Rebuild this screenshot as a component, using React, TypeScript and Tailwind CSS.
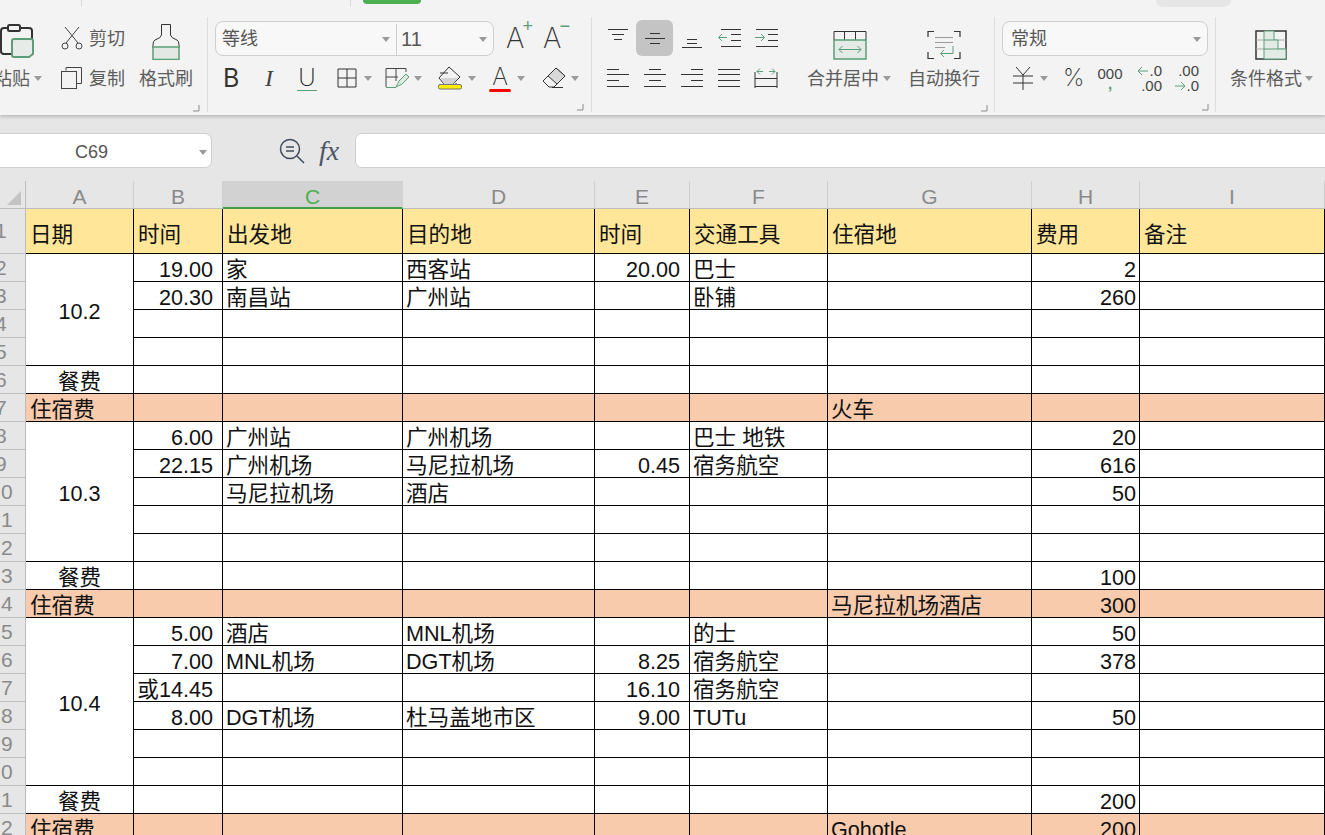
import React from "react";

const FONT = "[font-family:'Liberation_Sans','Noto_Sans_CJK_SC',sans-serif]";

function Caret() {
  return <span className="block h-0 w-0 border-x-[4px] border-t-[5px] border-x-transparent border-t-[#9a9a9a]" />;
}

function Corner() {
  return (
    <svg width="8" height="8" viewBox="0 0 8 8" className="block">
      <path d="M7 1V7H1" fill="none" stroke="#8c8c8c" />
    </svg>
  );
}

function Icon({ w, h, children }: { w: number; h: number; children: React.ReactNode }) {
  return (
    <svg width={w} height={h} viewBox={`0 0 ${w} ${h}`} className="block shrink-0" fill="none" stroke="#333" strokeWidth="1">
      {children}
    </svg>
  );
}

const G = "#5b9e78";

function Paste() {
  return (
    <Icon w={36} h={40}>
      <path d="M7 8H4a3 3 0 0 0-3 3v20a3 3 0 0 0 3 3h8M20 8h9a3 3 0 0 1 3 3v8" strokeWidth="2" />
      <rect x="8" y="5" width="12" height="6" rx="1.5" strokeWidth="2" />
      <path d="M14 19h17a2 2 0 0 1 2 2v13l-4 3H14a2 2 0 0 1-2-2V21a2 2 0 0 1 2-2z" fill="#e6ebe7" stroke={G} strokeWidth="2" />
    </Icon>
  );
}
function Cut() {
  return (
    <Icon w={24} h={24}>
      <path d="M5 1L18 17M19 1L6 17" stroke="#444" />
      <circle cx="5" cy="20" r="3" stroke="#444" />
      <circle cx="19" cy="20" r="3" stroke="#444" />
    </Icon>
  );
}
function Copy() {
  return (
    <Icon w={24} h={24}>
      <path d="M6 4.500V1.500H21.500V17.500H16" stroke="#444" />
      <rect x="1.500" y="5.500" width="15" height="17" stroke="#444" />
    </Icon>
  );
}
function Brush() {
  return (
    <Icon w={28} h={36}>
      <path d="M9.500 0.500H18.500V11Q19 14 25 16Q27 17 27 21V24H1V21Q1 17 3 16Q9 14 9.500 11Z" stroke="#333" />
      <rect x="1" y="23" width="26" height="12.500" fill="#e3e8e4" stroke={G} strokeWidth="1.500" />
    </Icon>
  );
}
function Borders() {
  return (
    <Icon w={20} h={20}>
      <path d="M1 1H19V19H1ZM10 1V19M1 10H19" stroke="#333" />
    </Icon>
  );
}
function PaintTable() {
  return (
    <Icon w={24} h={22}>
      <path d="M1 20V1.500H21V5M11 1.500V14M1 10H13" stroke="#444" />
      <path d="M1 20.500H11" stroke={G} />
      <path d="M11 20L14 14L21 7L24 10L17 17Z" stroke={G} fill="#dfeae3" />
    </Icon>
  );
}
function Fill() {
  return (
    <Icon w={24} h={24}>
      <path d="M11 1L22 11L15 18H6L1 12Z" stroke="#333" />
      <path d="M3 12H20L15 18H6Z" fill="#d2d2d2" stroke="none" />
      <path d="M2 7H10M18 19V17" stroke="#333" />
      <rect x="0.500" y="18.500" width="23" height="4.500" rx="1.500" fill="#ffee00" stroke="#777" />
    </Icon>
  );
}
function Eraser() {
  return (
    <Icon w={24} h={22}>
      <path d="M1 14L14 1L23 9L12 20H7Z" stroke="#333" />
      <path d="M6 9L14 1L23 9L15 17Z" fill="#d9d9d9" stroke="#333" />
      <path d="M10 20.500H21" stroke="#333" />
    </Icon>
  );
}
function LetterA({ size, color = "#333" }: { size: string; color?: string }) {
  return <span className={`block font-['Inter'] font-extralight ${size} leading-none`} style={{ color }}>A</span>;
}

function AlignBlock({ d, green }: { d: string; green?: string }) {
  return (
    <Icon w={24} h={24}>
      <path d={d} stroke="#333" />
      {green && <path d={green} stroke={G} />}
    </Icon>
  );
}
function Merge() {
  return (
    <Icon w={34} h={30}>
      <path d="M1 10V1.500H33V10M11.500 1.500V10M22.500 1.500V10" stroke="#333" />
      <rect x="1" y="10" width="32" height="19" fill="#e4ebe6" stroke={G} strokeWidth="1.500" />
      <path d="M6 19.500H28M9.500 16L6 19.500L9.500 23M24.500 16L28 19.500L24.500 23" stroke={G} />
    </Icon>
  );
}
function Wrap() {
  return (
    <Icon w={34} h={30}>
      <path d="M7 1.500H1V7M27 1.500H33V7M1 22V28.500H7M33 22V28.500H27" stroke="#333" strokeWidth="1.200" />
      <path d="M8 7.500H26M8 12.500H26M8 17.500H18" stroke="#999" />
      <path d="M26 16V23.500H14M17 20L13.500 23.500L17 27" stroke={G} />
    </Icon>
  );
}
function Yen() {
  return (
    <Icon w={20} h={24}>
      <path d="M3 1L10 9L17 1M0 10H20M0 17H20M10 9V24" stroke="#333" />
    </Icon>
  );
}
function Cond() {
  return (
    <Icon w={32} h={30}>
      <rect x="1" y="1" width="30" height="28" stroke="#333" strokeWidth="1.500" />
      <path d="M1 10H31M1 19H31M11 1V29M21 10V19" stroke="#aaa" />
      <path d="M9 1H19V10H23V19H31V29H9Z" fill="#e2ebe5" stroke={G} />
      <path d="M9 10H19M9 19H23" stroke={G} />
    </Icon>
  );
}
function SmallArrow({ left }: { left?: boolean }) {
  return (
    <svg width="12" height="10" viewBox="0 0 12 10" fill="none" stroke={G} className="block shrink-0">
      {left ? <path d="M11 5H1M5 1L1 5L5 9" /> : <path d="M1 5H11M7 1L11 5L7 9" />}
    </svg>
  );
}

function TextButton({ label }: { label: string }) {
  return <span className="pt-[2px] text-[18px] leading-[24px] text-[#5c5c5c] whitespace-nowrap">{label}</span>;
}

function Sep() {
  return <div className="w-px shrink-0 bg-[#dedede]" />;
}

function Combo({ className, children }: { className: string; children: React.ReactNode }) {
  return (
    <div className={`flex h-[35px] items-center rounded-[8px] border border-[#cfcfcf] bg-[#f8f8f8] pt-[2px] text-[18px] text-[#555] ${className}`}>
      {children}
    </div>
  );
}

function Ribbon() {
  return (
    <div className="relative z-10 h-[115px] bg-[#f3f3f3] shadow-[0_2px_3px_rgba(0,0,0,0.18)]">
      <div className="flex h-[17px] items-start overflow-hidden">
        <div className="ml-[81px] h-[7px] w-px bg-[#dcdcdc]" />
        <div className="ml-[268px] h-[7px] w-px bg-[#dcdcdc]" />
        <div className="ml-[12px] h-[4px] w-[58px] rounded-b-[8px] bg-[#4caf50]" />
        <div className="ml-[735px] h-[7px] w-[75px] rounded-b-[12px] bg-[#e6e6e6]" />
      </div>
      <div className="flex h-[95px]">
        {/* clipboard */}
        <div className="ml-[-10px] flex w-[217px] shrink-0 flex-col pt-[3px]">
          <div className="flex h-[76px]">
            <div className="flex w-[70px] shrink-0 flex-col">
              <div className="h-[40px] pl-[10px]"><Paste /></div>
              <div className="flex h-[36px] items-center gap-[4px] pl-[4px]">
                <span className="w-[36px] pt-[2px] text-[18px] leading-[24px] text-[#5c5c5c] whitespace-nowrap">粘贴</span>
                <Caret />
              </div>
            </div>
            <div className="flex w-[79px] shrink-0 flex-col">
              <div className="flex h-[36px] items-center gap-[5px]"><Cut /><TextButton label="剪切" /></div>
              <div className="mt-[4px] flex h-[36px] items-center gap-[5px]"><Copy /><TextButton label="复制" /></div>
            </div>
            <div className="flex w-[54px] shrink-0 flex-col items-center">
              <div className="h-[40px] pt-[4px]"><Brush /></div>
              <div className="flex h-[36px] items-center"><TextButton label="格式刷" /></div>
            </div>
          </div>
          <div className="mt-[8px] flex justify-end pr-[7px]"><Corner /></div>
        </div>
        <Sep />
        {/* font */}
        <div className="flex w-[383px] shrink-0 flex-col pt-[3px]">
          <div className="flex h-[36px] items-center pl-[7px]">
            <Combo className="w-[279px]">
              <div className="flex h-full w-[181px] items-center justify-between border-r border-[#cfcfcf] pl-[6px] pr-[6px]">
                <span>等线</span><Caret />
              </div>
              <div className="flex h-full flex-1 items-center justify-between pl-[4px] pr-[6px]">
                <span className="text-[20px]">11</span><Caret />
              </div>
            </Combo>
            <div className="relative ml-[12px] w-[24px]"><LetterA size="text-[28px]" /><span className="absolute right-[-3px] top-[-7px] text-[18px] leading-none text-[#5b9e78]">+</span></div>
            <div className="relative ml-[13px] w-[24px]"><LetterA size="text-[28px]" /><span className="absolute right-[-3px] top-[-7px] text-[18px] leading-none text-[#5b9e78]">−</span></div>
          </div>
          <div className="mt-[4px] flex h-[36px] items-center">
            <span className="ml-[15px] w-[17px] font-['Inter'] text-[25px] font-normal leading-none text-[#333]">B</span>
            <span className="ml-[25px] w-[10px] font-['Liberation_Serif'] text-[24px] italic leading-none text-[#444]">I</span>
            <div className="ml-[22px] flex w-[20px] flex-col items-center">
              <span className="font-['Inter'] text-[24px] font-extralight leading-[23px] text-[#222]">U</span>
              <div className="mt-[1px] h-px w-full bg-[#5b9e78]" />
            </div>
            <div className="ml-[20px]"><Borders /></div>
            <div className="ml-[7px]"><Caret /></div>
            <div className="ml-[13px]"><PaintTable /></div>
            <div className="ml-[5px]"><Caret /></div>
            <div className="ml-[16px]"><Fill /></div>
            <div className="ml-[6px]"><Caret /></div>
            <div className="ml-[13px] flex w-[22px] flex-col items-center">
              <LetterA size="text-[24px]" />
              <div className="h-[3px] w-full rounded-sm bg-[#ff0000]" />
            </div>
            <div className="ml-[6px]"><Caret /></div>
            <div className="ml-[17px]"><Eraser /></div>
            <div className="ml-[5px]"><Caret /></div>
          </div>
          <div className="mt-[7px] flex justify-end pr-[7px]"><Corner /></div>
        </div>
        <Sep />
        {/* alignment */}
        <div className="flex w-[402px] shrink-0 flex-col pt-[3px]">
          <div className="flex h-[76px]">
            <div className="ml-[7px] grid w-[185px] shrink-0 grid-cols-[repeat(5,37px)] grid-rows-[36px_36px] gap-y-[4px]">
              <div className="flex items-center justify-center"><AlignBlock d="M2 3.500H22M6 8.500H18M8 13.500H16" /></div>
              <div className="flex items-center justify-center rounded-[6px] bg-[#c4c4c4]"><AlignBlock d="M7 7.500H17M2 12.500H22M7 17.500H17" /></div>
              <div className="flex items-center justify-center"><AlignBlock d="M7 13.500H17M7 17.500H17M2 21.500H22" /></div>
              <div className="flex items-center justify-center"><AlignBlock d="M4 3.500H24M14 8.500H24M14 14.500H24M4 20.500H24" green="M10 11.500H2M5 8L1.500 11.500L5 15" /></div>
              <div className="flex items-center justify-center"><AlignBlock d="M2 3.500H24M14 8.500H24M14 14.500H24M2 20.500H24" green="M1 11.500H10M7 8L10.500 11.500L7 15" /></div>
              <div className="flex items-center justify-center"><AlignBlock d="M1 3.500H13M1 8.500H23M1 14.500H13M1 20.500H23" /></div>
              <div className="flex items-center justify-center"><AlignBlock d="M6 3.500H18M1 8.500H23M6 14.500H18M1 20.500H23" /></div>
              <div className="flex items-center justify-center"><AlignBlock d="M11 3.500H23M1 8.500H23M11 14.500H23M1 20.500H23" /></div>
              <div className="flex items-center justify-center"><AlignBlock d="M1 3.500H23M1 8.500H23M1 14.500H23M1 20.500H23" /></div>
              <div className="flex items-center justify-center"><AlignBlock d="M1 6V22M23 6V22M1 12.500H23M1 20.500H23" green="M3 5.500H9M6 2.500L3 5.500L6 8.500M21 5.500H15M18 2.500L21 5.500L18 8.500" /></div>
            </div>
            <div className="ml-[16px] flex w-[94px] shrink-0 flex-col pl-[7px]">
              <div className="flex h-[40px] items-end pl-[26px]"><Merge /></div>
              <div className="flex h-[36px] items-center gap-[4px]"><TextButton label="合并居中" /><Caret /></div>
            </div>
            <div className="ml-[14px] flex w-[72px] shrink-0 flex-col items-center">
              <div className="flex h-[40px] items-end"><Wrap /></div>
              <div className="flex h-[36px] items-center"><TextButton label="自动换行" /></div>
            </div>
          </div>
          <div className="mt-[8px] flex justify-end pr-[6px]"><Corner /></div>
        </div>
        <Sep />
        {/* number */}
        <div className="flex w-[220px] shrink-0 flex-col pt-[3px]">
          <div className="flex h-[36px] items-center pl-[7px]">
            <Combo className="w-[206px] justify-between pl-[8px] pr-[6px]"><span>常规</span><Caret /></Combo>
          </div>
          <div className="mt-[4px] flex h-[36px] items-center">
            <div className="ml-[18px]"><Yen /></div>
            <div className="ml-[7px]"><Caret /></div>
            <span className="ml-[15px] w-[22px] font-['Inter'] text-[24px] font-extralight leading-none text-[#333]">%</span>
            <div className="ml-[14px] flex w-[22px] flex-col items-center text-[15px] leading-[15px] text-[#444]">
              <span>000</span><span className="mt-[-3px] font-bold leading-[12px] text-[#5b9e78]">,</span>
            </div>
            <div className="ml-[17px] flex w-[24px] flex-col items-end text-[15px] leading-[15px] text-[#444]">
              <span className="flex items-center"><SmallArrow left /><span>.0</span></span>
              <span>.00</span>
            </div>
            <div className="ml-[13px] flex w-[24px] flex-col items-end text-[15px] leading-[15px] text-[#444]">
              <span>.00</span>
              <span className="flex items-center"><SmallArrow /><span>.0</span></span>
            </div>
          </div>
          <div className="mt-[7px] flex justify-end pr-[6px]"><Corner /></div>
        </div>
        <Sep />
        {/* conditional */}
        <div className="flex w-[100px] shrink-0 flex-col pl-[14px] pt-[3px]">
          <div className="flex h-[40px] items-end pl-[25px]"><Cond /></div>
          <div className="flex h-[36px] items-center gap-[3px]"><TextButton label="条件格式" /><Caret /></div>
        </div>
      </div>
    </div>
  );
}

function FormulaBar() {
  return (
    <div className="flex h-[66px] items-start bg-[#e6e6e6] pt-[18px]">
      <div className="ml-[-10px] flex h-[35px] w-[222px] shrink-0 items-center rounded-[7px] border border-[#cfcfcf] bg-white pr-[4px] pt-[3px] text-[18px] text-[#555]">
        <span className="ml-[84px] w-[34px]">C69</span>
        <span className="ml-auto"><Caret /></span>
      </div>
      <div className="ml-[67px] flex h-[35px] w-[28px] shrink-0 items-center">
        <svg width="26" height="26" viewBox="0 0 26 26" fill="none" stroke="#3f4b5c" strokeWidth="1.500">
          <circle cx="11" cy="11" r="9.500" />
          <path d="M7 9H15M7 13H15M18 18L25 25" />
        </svg>
      </div>
      <span className="ml-[12px] h-[35px] w-[24px] shrink-0 font-['Liberation_Serif'] text-[28px] italic leading-[35px] text-[#4b5563]">fx</span>
      <div className="ml-[12px] mr-[-10px] h-[35px] flex-1 rounded-[7px] border border-[#cfcfcf] bg-white" />
    </div>
  );
}

type Row = { a?: string; span?: number; aLeft?: boolean; b?: string; c?: string; d?: string; e?: string; f?: string; g?: string; h?: string; fill?: string };

const ROWS: Row[] = [
  { a: "10.2", span: 4, b: "19.00", c: "家", d: "西客站", e: "20.00", f: "巴士", h: "2" },
  { b: "20.30", c: "南昌站", d: "广州站", f: "卧铺", h: "260" },
  {},
  {},
  { a: "餐费", span: 1 },
  { a: "住宿费", span: 1, aLeft: true, g: "火车", fill: "bg-[#f8cbad]" },
  { a: "10.3", span: 5, b: "6.00", c: "广州站", d: "广州机场", f: "巴士 地铁", h: "20" },
  { b: "22.15", c: "广州机场", d: "马尼拉机场", e: "0.45", f: "宿务航空", h: "616" },
  { c: "马尼拉机场", d: "酒店", h: "50" },
  {},
  {},
  { a: "餐费", span: 1, h: "100" },
  { a: "住宿费", span: 1, aLeft: true, g: "马尼拉机场酒店", h: "300", fill: "bg-[#f8cbad]" },
  { a: "10.4", span: 6, b: "5.00", c: "酒店", d: "MNL机场", f: "的士", h: "50" },
  { b: "7.00", c: "MNL机场", d: "DGT机场", e: "8.25", f: "宿务航空", h: "378" },
  { b: "或14.45", e: "16.10", f: "宿务航空" },
  { b: "8.00", c: "DGT机场", d: "杜马盖地市区", e: "9.00", f: "TUTu", h: "50" },
  {},
  {},
  { a: "餐费", span: 1, h: "200" },
  { a: "住宿费", span: 1, aLeft: true, g: "Gohotle", h: "200", fill: "bg-[#f8cbad]" },
];

const HEADS = ["A", "B", "C", "D", "E", "F", "G", "H", "I"];
const TITLES = ["日期", "时间", "出发地", "目的地", "时间", "交通工具", "住宿地", "费用", "备注"];

const BASE = "border-r border-b border-black p-0 align-bottom text-[21.6px] text-[#111] whitespace-nowrap overflow-hidden";

function Cell({ text, right, fill, pr }: { text?: string; right?: boolean; fill?: string; pr?: string }) {
  return (
    <td className={`${BASE} ${fill ?? ""}`}>
      <div className={`h-[27px] leading-[31px] ${right ? `text-right ${pr}` : "pl-[3px]"}`}>{text}</div>
    </td>
  );
}

function RowNum({ n }: { n: number }) {
  return (
    <td className="border-r border-b border-[#bdbdbd] bg-[#e6e6e6] p-0 align-bottom overflow-hidden">
      <div className={`h-[27px] text-[21px] leading-[28px] text-[#8a8a8a] ${n < 10 ? "ml-[-5px]" : "ml-[1px]"}`}>{n % 10}</div>
    </td>
  );
}

function Sheet() {
  return (
    <table className="table-fixed w-[1325px] border-separate border-spacing-0">
      <colgroup>
        <col className="w-[26px]" />
        <col className="w-[108px]" />
        <col className="w-[89px]" />
        <col className="w-[180px]" />
        <col className="w-[192px]" />
        <col className="w-[95px]" />
        <col className="w-[138px]" />
        <col className="w-[204px]" />
        <col className="w-[108px]" />
        <col className="w-[185px]" />
      </colgroup>
      <thead>
        <tr className="h-[28px]">
          <th className="border-r border-b border-[#bdbdbd] bg-[#e6e6e6] p-0 font-normal">
            <svg width="16" height="14" viewBox="0 0 16 14" className="ml-[5px] mt-[6px] block"><path d="M16 0V14H2Z" fill="#c4c4c4" /></svg>
          </th>
          {HEADS.map((h) => (
            <th
              key={h}
              className={`border-r p-0 text-center text-[21px] font-normal ${
                h === "C"
                  ? "border-b-2 border-b-[#3f9f4a] border-r-[#d2d2d2] bg-[#d2d2d2] text-[#4caf50]"
                  : "border-b border-b-[#bdbdbd] border-r-[#cfcfcf] bg-[#e6e6e6] text-[#8a8a8a]"
              }`}
            >
              <div className={`leading-[31px] ${h === "C" ? "h-[26px]" : "h-[27px]"}`}>{h}</div>
            </th>
          ))}
        </tr>
      </thead>
      <tbody>
        <tr className="h-[45px]">
          <td className="border-r border-b border-[#bdbdbd] bg-[#e6e6e6] p-0 overflow-hidden">
            <div className="ml-[-5px] h-[44px] text-[21px] leading-[44px] text-[#8a8a8a]">1</div>
          </td>
          {TITLES.map((t, i) => (
            <td key={i} className={`${BASE} bg-[#ffe699]`}>
              <div className="h-[36px] pl-[4px] leading-[35px]">{t}</div>
            </td>
          ))}
        </tr>
        {ROWS.map((r, i) => (
          <tr key={i} className="h-[28px]">
            <RowNum n={i + 2} />
            {r.a !== undefined && (
              <td rowSpan={r.span} className={`border-r border-b border-black p-0 text-[21.6px] text-[#111] ${r.span! > 1 ? "align-middle" : "align-bottom"} ${r.fill ?? ""} ${r.aLeft ? "text-left" : "text-center"}`}>
                {r.span! > 1 ? (
                  <div className="pt-[5px]">{r.a}</div>
                ) : (
                  <div className={`h-[27px] leading-[31px] ${r.aLeft ? "pl-[4px]" : ""}`}>{r.a}</div>
                )}
              </td>
            )}
            <Cell text={r.b} right fill={r.fill} pr="pr-[9px]" />
            <Cell text={r.c} fill={r.fill} />
            <Cell text={r.d} fill={r.fill} />
            <Cell text={r.e} right fill={r.fill} pr="pr-[9px]" />
            <Cell text={r.f} fill={r.fill} />
            <Cell text={r.g} fill={r.fill} />
            <Cell text={r.h} right fill={r.fill} pr="pr-[3px]" />
            <Cell fill={r.fill} />
          </tr>
        ))}
      </tbody>
    </table>
  );
}

export default function App() {
  return (
    <div className={`h-[835px] w-[1325px] overflow-hidden bg-white ${FONT}`}>
      <Ribbon />
      <FormulaBar />
      <Sheet />
    </div>
  );
}
